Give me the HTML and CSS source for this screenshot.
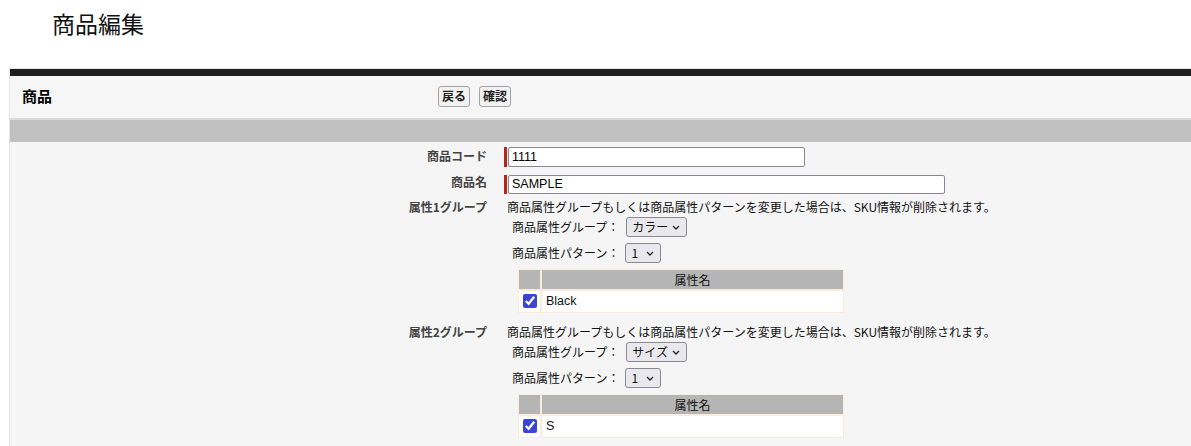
FILE: index.html
```html
<!DOCTYPE html>
<html lang="ja">
<head>
    <meta charset="UTF-8">
    <title>商品編集</title>
    <link rel="stylesheet" href="styles.css">
</head>
<body>
    <h1 class="page-title">商品編集</h1>

    <div class="panel">
        <div class="panel-head">
            <div class="panel-title">商品</div>
            <div class="panel-btns">
                <button type="button" class="btn">戻る</button>
                <button type="button" class="btn">確認</button>
            </div>
        </div>
        <div class="panel-bar"></div>

        <div class="panel-body">
            <div class="row row-input">
                <div class="label">商品コード</div>
                <div class="field"><span class="req"><input type="text" class="txt txt-code" value="1111"></span></div>
            </div>
            <div class="row row-input row-name">
                <div class="label">商品名</div>
                <div class="field"><span class="req"><input type="text" class="txt txt-name" value="SAMPLE"></span></div>
            </div>

            <div class="row row-group">
                <div class="label">属性1グループ</div>
                <div class="field">
                    <div class="desc">商品属性グループもしくは商品属性パターンを変更した場合は、SKU情報が削除されます。</div>
                    <div class="sel-row">
                        <span>商品属性グループ：</span>
                        <span class="sel sel-group">
                            <select><option>カラー</option></select>
                            <svg class="chev" width="8" height="5" viewBox="0 0 8 5"><path d="M1 1 L4 4 L7 1" fill="none" stroke="#222" stroke-width="1.3"/></svg>
                        </span>
                    </div>
                    <div class="sel-row">
                        <span>商品属性パターン：</span>
                        <span class="sel sel-num">
                            <select><option>1</option></select>
                            <svg class="chev" width="8" height="5" viewBox="0 0 8 5"><path d="M1 1 L4 4 L7 1" fill="none" stroke="#222" stroke-width="1.3"/></svg>
                        </span>
                    </div>
                    <table class="attr-table">
                        <tr><th class="col-chk"></th><th>属性名</th></tr>
                        <tr><td class="col-chk"><input type="checkbox" checked></td><td>Black</td></tr>
                    </table>
                </div>
            </div>

            <div class="row row-group row-group2">
                <div class="label">属性2グループ</div>
                <div class="field">
                    <div class="desc">商品属性グループもしくは商品属性パターンを変更した場合は、SKU情報が削除されます。</div>
                    <div class="sel-row">
                        <span>商品属性グループ：</span>
                        <span class="sel sel-group">
                            <select><option>サイズ</option></select>
                            <svg class="chev" width="8" height="5" viewBox="0 0 8 5"><path d="M1 1 L4 4 L7 1" fill="none" stroke="#222" stroke-width="1.3"/></svg>
                        </span>
                    </div>
                    <div class="sel-row">
                        <span>商品属性パターン：</span>
                        <span class="sel sel-num">
                            <select><option>1</option></select>
                            <svg class="chev" width="8" height="5" viewBox="0 0 8 5"><path d="M1 1 L4 4 L7 1" fill="none" stroke="#222" stroke-width="1.3"/></svg>
                        </span>
                    </div>
                    <table class="attr-table">
                        <tr><th class="col-chk"></th><th>属性名</th></tr>
                        <tr><td class="col-chk"><input type="checkbox" checked></td><td>S</td></tr>
                    </table>
                </div>
            </div>
        </div>
    </div>
</body>
</html>
```

FILE: styles.css
```css
body {
    margin: 0;
    background: #fff;
    color: #111;
    font-family: "Noto Sans CJK JP", "Noto Sans", sans-serif;
    font-size: 12px;
    overflow: hidden;
}

.page-title {
    margin: 0;
    padding: 8px 0 0 52px;
    height: 68px;
    box-sizing: border-box;
    font-size: 23px;
    font-weight: normal;
    line-height: 30px;
}

.panel {
    margin-left: 9px;
    border-top: 1px solid #e4e4e4;
    border-left: 1px solid #e4e4e4;
    background: #f5f5f5;
}

.panel-head {
    display: flex;
    align-items: center;
    height: 39px;
    padding-bottom: 3px;
    border-top: 7px solid #1f1f1f;
    border-bottom: 2px solid #dcdcdc;
    background: #f6f6f6;
}

.panel-title {
    width: 416px;
    padding-left: 12px;
    font-size: 15px;
    font-weight: bold;
    color: #000;
}

.panel-btns {
    display: flex;
    gap: 9px;
    margin-top: 1px;
}

.btn {
    height: 21px;
    padding: 0 3px;
    font-family: inherit;
    font-size: 12px;
    font-weight: bold;
    line-height: 18px;
    color: #222;
    background: #f2f2f2;
    border: 1px solid #a4a4a4;
    border-radius: 3px;
}

.panel-bar {
    height: 22px;
    background: #c0c0c0;
}

.panel-body {
    padding: 5px 0 20px;
}

.row {
    display: grid;
    grid-template-columns: 494px 1fr;
}

.row-input {
    align-items: center;
}

.row-input .label {
    padding-bottom: 3px;
}

.row-name {
    margin-top: 7px;
}

.row-group {
    margin-top: 6px;
}

.row-group2 {
    margin-top: 12px;
}

.label {
    padding-right: 17px;
    text-align: right;
    font-weight: bold;
    color: #444;
    line-height: 14px;
}

.req {
    display: inline-flex;
    border-left: 3px solid #b3271b;
    padding-left: 1px;
}

.txt {
    height: 20px;
    box-sizing: border-box;
    padding: 0 3px;
    font-family: "Liberation Sans", sans-serif;
    font-size: 12.5px;
    color: #000;
    background: #fff;
    border: 1px solid #8a8699;
    border-radius: 2px;
}

.txt-code {
    width: 297px;
}

.txt-name {
    width: 437px;
    height: 19px;
}

.desc {
    padding-left: 3px;
    line-height: 14px;
    color: #111;
}

.sel-row {
    display: flex;
    align-items: center;
    margin-top: 3px;
    padding-left: 8px;
    line-height: 20px;
}

.sel-row + .sel-row {
    margin-top: 6px;
}

.sel {
    position: relative;
    display: inline-block;
    margin-left: 7px;
}

.sel select {
    appearance: none;
    -webkit-appearance: none;
    height: 20px;
    box-sizing: border-box;
    padding: 0 0 0 5px;
    font-family: inherit;
    font-size: 12px;
    line-height: 18px;
    color: #111;
    background: #e9e9ed;
    border: 1px solid #8a8a96;
    border-radius: 3px;
}

.sel-group select {
    width: 61px;
}

.sel-num select {
    width: 36px;
}

.sel-num {
    margin-left: 6px;
}

.chev {
    position: absolute;
    right: 7px;
    top: 8px;
}

.attr-table {
    margin: 6px 0 0 14px;
    width: 326px;
    border-spacing: 0;
}

.attr-table th,
.attr-table td {
    padding: 0;
    border: 1px solid #f8ecdd;
}

.attr-table th {
    font-weight: normal;
    font-size: 12px;
    background: #b5b5b5;
    color: #111;
    line-height: 19px;
}

.attr-table td {
    padding-left: 4px;
    background: #fff;
    font-family: "Liberation Sans", sans-serif;
    font-size: 12.5px;
    line-height: 21px;
}

.attr-table .col-chk {
    width: 21px;
    padding: 0;
    text-align: center;
}

.attr-table input {
    display: block;
    width: 14px;
    height: 14px;
    margin: 0 auto;
    accent-color: #3a45d8;
}
```
